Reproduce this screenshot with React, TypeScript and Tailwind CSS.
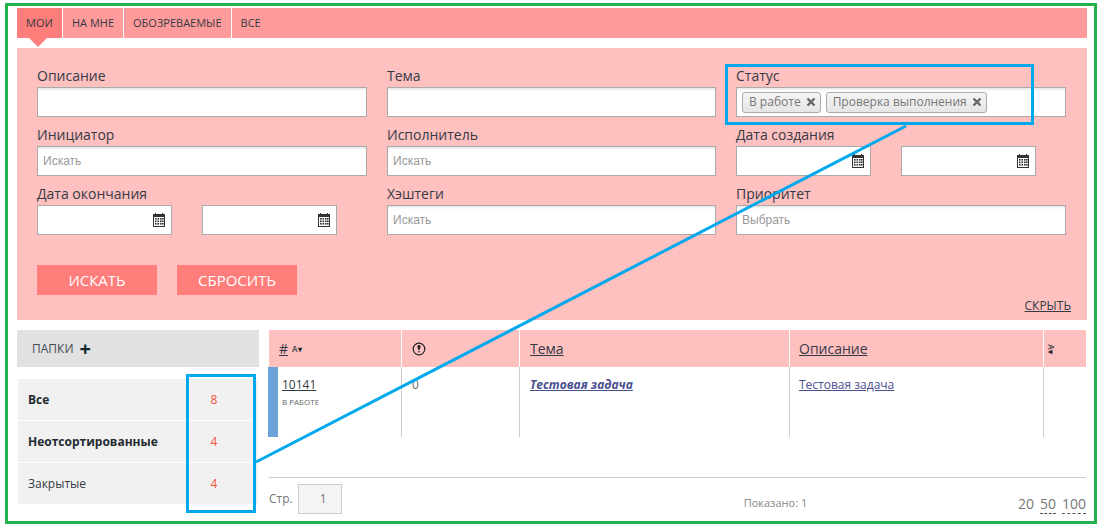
const font = { fontFamily: '"Open Sans", "Noto Sans", sans-serif' };

function Calendar() {
  return (
    <svg width="12" height="14" viewBox="0 0 12 14" className="absolute right-[6px] top-[7px]">
      <rect x="0.5" y="1.5" width="11" height="12" fill="#fff" stroke="#333" />
      <rect x="0" y="1" width="12" height="3" fill="#333" />
      <rect x="2" y="0" width="1" height="2" fill="#333" />
      <rect x="9" y="0" width="1" height="2" fill="#333" />
      {[5, 7.5, 10].map((y) =>
        [2, 4.5, 7, 9].map((x) => <rect key={`${x}-${y}`} x={x} y={y} width="1.6" height="1.6" fill="#333" />),
      )}
    </svg>
  );
}

function TextInput({ placeholder, w = "w-[330px]" }: { placeholder?: string; w?: string }) {
  return (
    <div className={`${w} h-[30px] bg-white border border-[#aaaaaa] px-[5px] flex items-center font-['Liberation_Sans'] text-xs text-[#999999] shadow-[inset_0_3px_3px_-2px_#dddddd]`}>
      {placeholder}
    </div>
  );
}

function DateInput() {
  return (
    <div className="relative w-[135px] h-[30px] bg-white border border-[#aaaaaa]">
      <Calendar />
    </div>
  );
}

function Field({ label, children }: { label: string; children: React.ReactNode }) {
  return (
    <div className="h-[59px]">
      <div className="h-[21px] text-sm leading-[19px] text-[#333b44]">{label}</div>
      {children}
    </div>
  );
}

function Tag({ text }: { text: string }) {
  return (
    <div className="h-[21px] flex items-center gap-[5px] pl-[6px] pr-[4px] rounded-[3px] border border-[#aaaaaa] bg-linear-to-b from-[#f4f4f4] to-[#e6e6e6] text-xs text-[#777777]">
      {text}
      <svg width="10" height="10" viewBox="0 0 10 10">
        <path d="M1.5 1.5 L8.5 8.5 M8.5 1.5 L1.5 8.5" stroke="#666666" strokeWidth="2.4" />
      </svg>
    </div>
  );
}

function SortIcon() {
  return (
    <span className="text-[8px] font-bold text-[#555555] leading-none">
      A<span className="text-[#222222]">▾</span>
    </span>
  );
}

export default function App() {
  const tabs = ["На мне", "Обозреваемые", "Все"];
  const folders = [
    { name: "Все", count: 8, bold: true },
    { name: "Неотсортированные", count: 4, bold: true },
    { name: "Закрытые", count: 4, bold: false },
  ];

  return (
    <div className="relative w-[1100px] h-[528px] overflow-hidden bg-white pl-[5px] pt-[3px]" style={font}>
      <div className="w-[1092px] h-[521px] border-[3px] border-[#22b14c] pl-[9px] pr-[7px] pt-[2px]">
        {/* Tabs */}
        <div className="h-[30px] flex bg-[#ff9b9b] text-[11px] uppercase text-[#333b44]">
          <div className="relative w-[45px] flex items-center justify-center bg-[#ff7d7a]">
            Мои
            <div className="absolute left-[12px] top-[30px] w-0 h-0 border-l-[9px] border-r-[9px] border-t-[9px] border-l-transparent border-r-transparent border-t-[#ff7d7a]" />
          </div>
          {tabs.map((t) => (
            <div key={t} className="flex items-center pl-[9px] pr-[9px] border-l border-white">
              {t}
            </div>
          ))}
        </div>

        {/* Filter */}
        <div className="relative mt-[10px] h-[272px] bg-[#ffc0c0] pl-[20px] pt-[18px]">
          <div className="grid grid-cols-[350px_349px_330px]">
            <Field label="Описание"><TextInput /></Field>
            <Field label="Тема"><TextInput w="w-[329px]" /></Field>
            <Field label="Статус">
              <div className="w-[330px] h-[30px] bg-white border border-[#aaaaaa] pl-[5px] flex items-center gap-[5px] shadow-[inset_0_3px_3px_-2px_#dddddd]">
                <Tag text="В работе" />
                <Tag text="Проверка выполнения" />
              </div>
            </Field>
            <Field label="Инициатор"><TextInput placeholder="Искать" /></Field>
            <Field label="Исполнитель"><TextInput placeholder="Искать" w="w-[329px]" /></Field>
            <Field label="Дата создания">
              <div className="flex gap-[30px]"><DateInput /><DateInput /></div>
            </Field>
            <Field label="Дата окончания">
              <div className="flex gap-[30px]"><DateInput /><DateInput /></div>
            </Field>
            <Field label="Хэштеги"><TextInput placeholder="Искать" w="w-[329px]" /></Field>
            <Field label="Приоритет"><TextInput placeholder="Выбрать" /></Field>
          </div>
          <div className="flex gap-[20px] mt-[22px]">
            <button className="w-[120px] h-[30px] bg-[#ff7d7a] text-white text-[15px] uppercase">Искать</button>
            <button className="w-[120px] h-[30px] bg-[#ff7d7a] text-white text-[15px] uppercase">Сбросить</button>
          </div>
          <a className="absolute right-[16px] bottom-[6px] text-xs uppercase underline text-[#333b44]">Скрыть</a>
        </div>

        <div className="flex mt-[10px] gap-[10px]">
          {/* Folders */}
          <div className="w-[242px]">
            <div className="h-[37px] bg-[#e1e1e1] pl-[15px] flex items-center gap-[6px] text-xs uppercase text-[#444b52]">
              Папки
              <span className="text-xl leading-none font-bold text-[#10282e]">+</span>
            </div>
            <div className="mt-[12px] ml-[1px] w-[240px] flex flex-col gap-px">
              {folders.map((f) => (
                <div key={f.name} className="h-[41px] bg-[#f1f1f1] flex items-center pl-[10px] text-xs text-[#333b44]">
                  <span className={`w-[167px] ${f.bold ? "font-bold text-[#1f2a30]" : ""}`}>{f.name}</span>
                  <span className="w-[38px] text-center text-xs text-[#f4503c]">{f.count}</span>
                </div>
              ))}
            </div>
          </div>

          {/* Table */}
          <div className="w-[817px] text-[#333b44]">
            <div className="h-[37px] bg-[#ffc0c0] grid grid-cols-[132px_118px_270px_254px_43px] text-sm">
              <div className="flex items-center gap-[4px] pl-[10px]">
                <span className="underline">#</span>
                <SortIcon />
              </div>
              <div className="flex items-center pl-[10px] border-l border-white">
                <svg width="14" height="14" viewBox="0 0 14 14">
                  <circle cx="7" cy="7" r="5.8" fill="none" stroke="#222" strokeWidth="1.2" />
                  <path d="M5.4 4.6 a1.6 1.6 0 0 1 3.2 0 L7.6 8 H6.4 Z" fill="#222" />
                  <rect x="6.3" y="9" width="1.4" height="1.4" fill="#222" />
                </svg>
              </div>
              <div className="flex items-center pl-[10px] border-l border-white"><span className="underline">Тема</span></div>
              <div className="flex items-center pl-[9px] border-l border-white"><span className="underline">Описание</span></div>
              <div className="flex items-center pl-[4px] border-l border-white">
                <span className="rotate-90 inline-block"><SortIcon /></span>
              </div>
            </div>
            <div className="h-[70px] grid grid-cols-[132px_118px_270px_254px_43px]">
              <div className="relative pl-[13px] pt-[10px]">
                <div className="absolute -left-[1px] top-0 w-[10px] h-[70px] bg-[#6ca3d9]" />
                <div className="text-xs leading-4 underline">10141</div>
                <div className="whitespace-nowrap mt-[4px] text-[8px] leading-[10px] uppercase text-[#666666]">В работе</div>
              </div>
              <div className="border-l border-[#cccccc] pl-[10px] pt-[10px] text-xs leading-4 text-[#666666]">0</div>
              <div className="border-l border-[#cccccc] pl-[10px] pt-[10px] text-xs leading-4 font-bold italic underline text-[#4a4f8f]">Тестовая задача</div>
              <div className="border-l border-[#cccccc] pl-[9px] pt-[10px] text-xs leading-4 underline text-[#4a4f8f]">Тестовая задача</div>
              <div className="border-l border-[#cccccc]" />
            </div>
            <div className="mt-[40px] border-t border-[#cccccc] pt-[6px] h-[38px] flex relative">
              <div className="flex items-center gap-[5px] text-xs text-[#777777] h-[30px]">
                Стр.
                <div className="w-[44px] h-[30px] bg-[#f4f4f4] border border-[#cccccc] flex items-center justify-end pr-[14px]">1</div>
              </div>
              <div className="ml-[402px] mt-[11px] text-[11px] leading-4 text-[#888888]">Показано: 1</div>
              <div className="ml-auto mt-[10px] text-sm leading-5 text-[#777777] flex gap-[6px]">
                <span>20</span>
                <span className="border-b border-dashed border-[#555555] h-[20px]">50</span>
                <span className="border-b border-dashed border-[#555555] h-[20px]">100</span>
              </div>
            </div>
          </div>
        </div>
      </div>

      {/* Annotations */}
      <div className="absolute left-[725px] top-[64px] w-[309px] h-[61px] border-[3px] border-[#00a8ec]" />
      <div className="absolute left-[186px] top-[374px] w-[70px] h-[139px] border-[3px] border-[#00a8ec]" />
      <svg className="absolute left-0 top-0" width="1100" height="528">
        <line x1="906" y1="126" x2="256" y2="462" stroke="#00a8ec" strokeWidth="3" />
      </svg>
    </div>
  );
}
